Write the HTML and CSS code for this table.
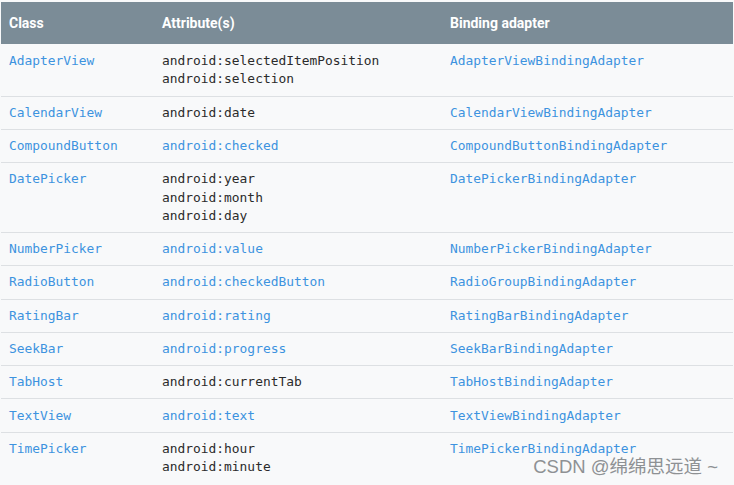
FILE: index.html
```html
<!DOCTYPE html>
<html>
<head>
<meta charset="utf-8">
<link rel="stylesheet" href="styles.css">
</head>
<body>
<div class="page">
<table class="adapters">
  <colgroup><col class="c1"><col class="c2"><col class="c3"></colgroup>
  <thead>
    <tr><th>Class</th><th>Attribute(s)</th><th>Binding adapter</th></tr>
  </thead>
  <tbody>
    <tr class="first"><td class="link">AdapterView</td><td>android:selectedItemPosition<br>android:selection</td><td class="link">AdapterViewBindingAdapter</td></tr>
    <tr><td class="link">CalendarView</td><td>android:date</td><td class="link">CalendarViewBindingAdapter</td></tr>
    <tr><td class="link">CompoundButton</td><td class="link">android:checked</td><td class="link">CompoundButtonBindingAdapter</td></tr>
    <tr><td class="link">DatePicker</td><td>android:year<br>android:month<br>android:day</td><td class="link">DatePickerBindingAdapter</td></tr>
    <tr><td class="link">NumberPicker</td><td class="link">android:value</td><td class="link">NumberPickerBindingAdapter</td></tr>
    <tr><td class="link">RadioButton</td><td class="link">android:checkedButton</td><td class="link">RadioGroupBindingAdapter</td></tr>
    <tr><td class="link">RatingBar</td><td class="link">android:rating</td><td class="link">RatingBarBindingAdapter</td></tr>
    <tr><td class="link">SeekBar</td><td class="link">android:progress</td><td class="link">SeekBarBindingAdapter</td></tr>
    <tr><td class="link">TabHost</td><td>android:currentTab</td><td class="link">TabHostBindingAdapter</td></tr>
    <tr><td class="link">TextView</td><td class="link">android:text</td><td class="link">TextViewBindingAdapter</td></tr>
    <tr><td class="link">TimePicker</td><td>android:hour<br>android:minute</td><td class="link">TimePickerBindingAdapter</td></tr>
  </tbody>
</table>
<div class="watermark">CSDN @绵绵思远道 ~</div>
</div>
</body>
</html>
```
FILE: styles.css
```css
html, body {
  margin: 0;
  padding: 0;
  background: #f8f9fa;
}
.page {
  position: relative;
  width: 734px;
  height: 485px;
  overflow: hidden;
  padding: 2px 1px 0 1px;
  box-sizing: border-box;
  background: #f8f9fa;
}
.adapters {
  width: 732px;
  border-collapse: collapse;
  table-layout: fixed;
}
.c1 { width: 153px; }
.c2 { width: 288px; }
.c3 { width: 291px; }
.adapters th {
  background: #7b8c97;
  color: #ffffff;
  font-family: Roboto, "Liberation Sans", sans-serif;
  font-weight: 700;
  font-size: 14px;
  text-align: left;
  height: 42px;
  padding: 0 8px;
  box-sizing: border-box;
}
.adapters td {
  font-family: "DejaVu Sans Mono", "Liberation Mono", monospace;
  font-size: 12.9px;
  line-height: 18.3px;
  color: #2b2b2b;
  padding: 7.2px 8px 6.8px 8px;
  vertical-align: top;
  border-bottom: 1px solid #dde0e3;
  white-space: nowrap;
}
.adapters tr.first td {
  padding-top: 7.7px;
  padding-bottom: 7.3px;
}
.adapters tr:last-child td {
  border-bottom: none;
}
.adapters td.link {
  color: #3d93df;
}
.watermark {
  position: absolute;
  right: 16px;
  bottom: 7px;
  font-family: "Liberation Sans", "Noto Sans CJK SC", sans-serif;
  font-size: 18.5px;
  color: #8e9194;
}
```
